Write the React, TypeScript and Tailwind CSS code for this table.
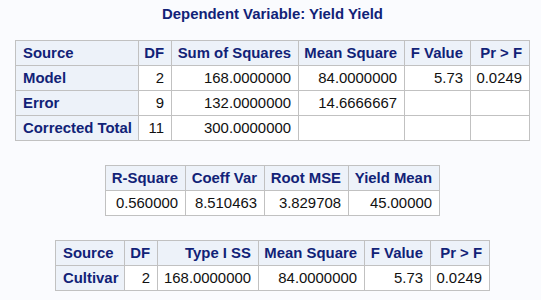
import React from "react";

type Cell = { t: string; h?: boolean; left?: boolean };

function Table({ widths, rows }: { widths: number[]; rows: Cell[][] }) {
  const cols = widths.map((w) => `${w}px`).join(" ");
  return (
    <div
      className="grid border-l border-t border-[#c1c1c1] self-center"
      style={{ gridTemplateColumns: cols }}
    >
      {rows.flatMap((r, i) =>
        r.map((c, j) => (
          <div
            key={`${i}-${j}`}
            className={
              "h-[25px] border-r border-b border-[#c1c1c1] px-[7px] pt-[1px] flex items-center whitespace-nowrap " +
              (c.h
                ? "bg-[#edf2f9] font-bold text-[#112277] "
                : "bg-white text-[#111] ") +
              (c.left ? "justify-start" : "justify-end")
            }
          >
            {c.t}
          </div>
        ))
      )}
    </div>
  );
}

const H = (t: string, left = false): Cell => ({ t, h: true, left });
const D = (t: string): Cell => ({ t });

export default function App() {
  return (
    <div
      className="w-[541px] h-[300px] bg-[#fafbfe] pl-[4px] flex flex-col text-[14.9px] overflow-hidden"
      style={{ fontFamily: '"Liberation Sans", Arial, sans-serif' }}
    >
      <div className="h-[27px] pt-[1px] flex items-center justify-center font-bold text-[#112277] mb-[13px]">
        Dependent Variable: Yield Yield
      </div>
      <Table
        widths={[123, 33, 127, 106, 66, 59]}
        rows={[
          [H("Source", true), H("DF"), H("Sum of Squares"), H("Mean Square"), H("F Value"), H("Pr > F")],
          [H("Model", true), D("2"), D("168.0000000"), D("84.0000000"), D("5.73"), D("0.0249")],
          [H("Error", true), D("9"), D("132.0000000"), D("14.6666667"), D(""), D("")],
          [H("Corrected Total", true), D("11"), D("300.0000000"), D(""), D(""), D("")],
        ]}
      />
      <div className="h-[24px] shrink-0" />
      <Table
        widths={[80, 79, 84, 91]}
        rows={[
          [H("R-Square"), H("Coeff Var"), H("Root MSE"), H("Yield Mean")],
          [D("0.560000"), D("8.510463"), D("3.829708"), D("45.00000")],
        ]}
      />
      <div className="h-[24px] shrink-0" />
      <Table
        widths={[69, 33, 101, 106, 66, 59]}
        rows={[
          [H("Source", true), H("DF"), H("Type I SS"), H("Mean Square"), H("F Value"), H("Pr > F")],
          [H("Cultivar", true), D("2"), D("168.0000000"), D("84.0000000"), D("5.73"), D("0.0249")],
        ]}
      />
    </div>
  );
}
